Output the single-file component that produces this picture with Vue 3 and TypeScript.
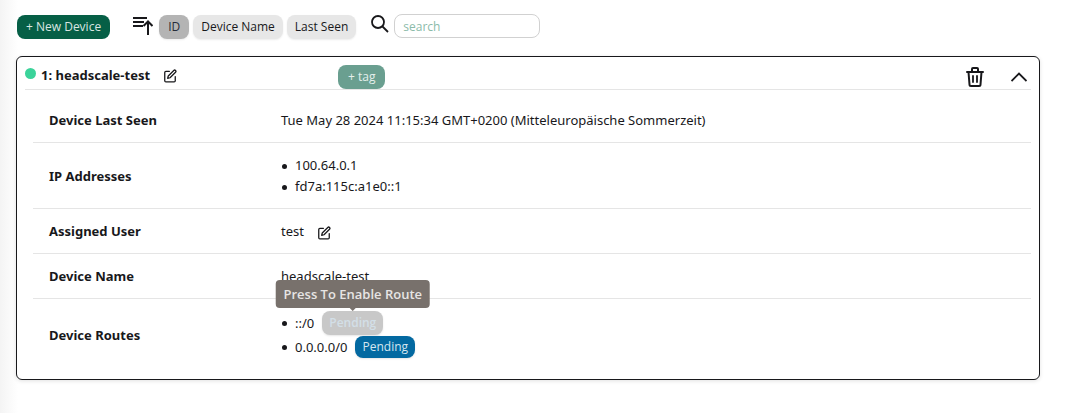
<script setup lang="ts">
import { ref } from 'vue'

interface Route {
  prefix: string
  hovered: boolean
}

const sortKeys: string[] = ['ID', 'Device Name', 'Last Seen']
const activeSort = ref<string>('ID')
const search = ref<string>('')
const addresses: string[] = ['100.64.0.1', 'fd7a:115c:a1e0::1']
const routes: Route[] = [
  { prefix: '::/0', hovered: true },
  { prefix: '0.0.0.0/0', hovered: false },
]
</script>

<template>
  <main class="page">
    <div class="toolbar">
      <button class="btn primary" type="button">+ New Device</button>
      <div class="sorting">
        <button class="icon-btn" type="button" aria-label="Sort direction">
          <svg class="sort-icon" viewBox="0 0 20 20" fill="none" stroke="currentColor" stroke-width="2">
            <path d="M0 3h14M0 7h11M0 11h10M15 20V7M10.500 11 15 6.500l4.500 4.500" />
          </svg>
        </button>
        <button
          v-for="key in sortKeys"
          :key="key"
          class="btn sort"
          :class="{ active: key === activeSort }"
          type="button"
          @click="activeSort = key"
        >{{ key }}</button>
      </div>
      <div class="search">
        <label for="device-search" aria-label="Search devices">
          <svg class="search-icon" viewBox="0 0 18 18" fill="none" stroke="currentColor" stroke-width="1.800">
            <circle cx="7" cy="7" r="6" />
            <path d="m11.500 11.500 5.500 5.500" />
          </svg>
        </label>
        <input id="device-search" v-model="search" type="text" placeholder="search" />
      </div>
    </div>

    <section class="card">
      <header class="card-head">
        <div class="title">
          <span class="status"></span>
          <h2>1: headscale-test</h2>
          <button class="icon-btn" type="button" aria-label="Rename device">
            <svg class="edit-icon" viewBox="0 0 24 24" fill="none" stroke="currentColor" stroke-width="2.200" stroke-linecap="round" stroke-linejoin="round">
              <path d="M11 4H5a2 2 0 0 0-2 2v14a2 2 0 0 0 2 2h14a2 2 0 0 0 2-2v-7" />
              <path d="M18.500 2.500a2.100 2.100 0 0 1 3 3L12 15l-4 1 1-4Z" />
            </svg>
          </button>
        </div>
        <button class="btn tag" type="button">+ tag</button>
        <div class="actions">
          <button class="icon-btn" type="button" aria-label="Delete device">
            <svg class="trash-icon" viewBox="0 0 18 20" fill="none" stroke="currentColor" stroke-width="2" stroke-linecap="round" stroke-linejoin="round">
              <path d="M1 5h16M6 5V2q0-1 1-1h4q1 0 1 1v3M2.500 5l1 12.500q0 1.500 1.500 1.500h8q1.500 0 1.500-1.500l1-12.500" />
              <path d="M7 9v6M11 9v6" stroke-width="1.800" />
            </svg>
          </button>
          <button class="icon-btn" type="button" aria-label="Collapse device">
            <svg class="chevron-icon" viewBox="0 0 16 10" fill="none" stroke="currentColor" stroke-width="1.800">
              <path d="m0.500 9 7.500-7.500L15.500 9" />
            </svg>
          </button>
        </div>
      </header>

      <table>
        <tbody>
          <tr>
            <th scope="row">Device Last Seen</th>
            <td>Tue May 28 2024 11:15:34 GMT+0200 (Mitteleuropäische Sommerzeit)</td>
          </tr>
          <tr>
            <th scope="row">IP Addresses</th>
            <td>
              <ul>
                <li v-for="address in addresses" :key="address">{{ address }}</li>
              </ul>
            </td>
          </tr>
          <tr>
            <th scope="row">Assigned User</th>
            <td>
              <div class="user">
                <span>test</span>
                <button class="icon-btn" type="button" aria-label="Change user">
                  <svg class="edit-icon" viewBox="0 0 24 24" fill="none" stroke="currentColor" stroke-width="2.200" stroke-linecap="round" stroke-linejoin="round">
                    <path d="M11 4H5a2 2 0 0 0-2 2v14a2 2 0 0 0 2 2h14a2 2 0 0 0 2-2v-7" />
                    <path d="M18.500 2.500a2.100 2.100 0 0 1 3 3L12 15l-4 1 1-4Z" />
                  </svg>
                </button>
              </div>
            </td>
          </tr>
          <tr>
            <th scope="row">Device Name</th>
            <td>headscale-test</td>
          </tr>
          <tr>
            <th scope="row">Device Routes</th>
            <td>
              <ul class="routes">
                <li v-for="route in routes" :key="route.prefix">
                  <span>{{ route.prefix }}</span>
                  <span class="route-state">
                    <button class="btn pending" :class="{ muted: route.hovered }" type="button">Pending</button>
                    <span v-if="route.hovered" class="tooltip" role="tooltip">Press To Enable Route</span>
                  </span>
                </li>
              </ul>
            </td>
          </tr>
        </tbody>
      </table>
    </section>
  </main>
</template>

<style>
html {
  min-height: 100%;
  background: linear-gradient(to right, #f4f4f4, #ffffff 18px);
}

body {
  margin: 0;
}
</style>

<style scoped>
.page {
  box-sizing: border-box;
  padding: 14px 34px 32px 16px;
  color: #18181b;
  font: 13px/21px "Segoe UI", "Noto Sans", "Open Sans", sans-serif;
}

button,
input {
  box-sizing: border-box;
  margin: 0;
  font: inherit;
  color: inherit;
}

svg {
  display: block;
}

.toolbar {
  display: flex;
  align-items: flex-start;
  height: 26px;
  padding-left: 1px;
  margin-bottom: 16px;
}

.btn {
  height: 24px;
  padding: 0 9px;
  border: 0;
  border-radius: 8px;
  font-family: "Segoe UI", "Open Sans", sans-serif;
  font-size: 12px;
  line-height: 24px;
  white-space: nowrap;
  cursor: pointer;
}

.toolbar .btn {
  margin-top: 1px;
}

.primary {
  background: #065f46;
  color: #d9e6e2;
}

.sorting {
  display: flex;
  gap: 4px;
  margin-left: 23px;
}

.icon-btn {
  flex: none;
  padding: 0;
  border: 0;
  background: none;
  cursor: pointer;
}

.sort-icon {
  width: 20px;
  height: 20px;
  margin: 0 2px 3px 0;
}

.sort {
  padding: 0 8px;
  background: #e7e7e7;
  box-shadow: 0 1px 2px rgba(0, 0, 0, 0.08);
}

.sort.active {
  padding: 0 9px;
  background: #b4b4b4;
  color: #262c38;
}

.search {
  display: flex;
  gap: 5px;
  margin-left: 15px;
}

.search-icon {
  width: 18px;
  height: 18px;
  margin-top: 1px;
}

.search input {
  width: 146px;
  height: 24px;
  padding: 0 8px;
  border: 1px solid #d1d1d1;
  border-radius: 8px;
  background: #ffffff;
  font-family: "Segoe UI", "Open Sans", sans-serif;
  font-size: 12px;
  outline: 0;
}

.search input::placeholder {
  color: #8bbba9;
  opacity: 1;
}

.card {
  padding: 0 8px 9px;
  border: 1px solid #18181b;
  border-radius: 6px;
  background: #ffffff;
  box-shadow: 0 1px 4px rgba(0, 0, 0, 0.12);
}

.card-head {
  display: grid;
  grid-template-columns: 313px auto 1fr;
  align-items: end;
  height: 32px;
  border-bottom: 1px solid #e5e5e5;
}

.title {
  display: flex;
  align-items: center;
  height: 28px;
}

.status {
  width: 11px;
  height: 11px;
  margin: 0 5px 3px 0;
  border-radius: 50%;
  background: #3bd39a;
}

h2 {
  margin: 0 13px 0 0;
  font-size: 13px;
  line-height: 21px;
  font-weight: 700;
}

.edit-icon {
  width: 14px;
  height: 14px;
  margin-top: 2px;
}

.tag {
  padding: 0 10px;
  background: #6a9f90;
  color: #e5efec;
}

.actions {
  display: flex;
  justify-content: flex-end;
  align-items: center;
  gap: 27px;
  height: 24px;
  padding-right: 4px;
}

.trash-icon {
  width: 18px;
  height: 20px;
}

.chevron-icon {
  width: 16px;
  height: 10px;
}

table {
  width: calc(100% - 8px);
  margin: 8px 0 0 8px;
  border-collapse: separate;
  border-spacing: 0;
}

th,
td {
  padding: 12px 16px 11px;
  border-bottom: 1px solid #e5e5e5;
  text-align: left;
  vertical-align: middle;
}

th {
  box-sizing: border-box;
  width: 232px;
  font-weight: 700;
}

tr:last-child > * {
  border-bottom: 0;
}

ul {
  margin: 0;
  padding: 0;
  list-style: none;
}

li {
  display: flex;
  align-items: center;
}

li::before {
  content: "";
  width: 5px;
  height: 5px;
  margin: 1px 8px 0 1px;
  border-radius: 50%;
  background: currentColor;
}

.user {
  display: flex;
  align-items: center;
  gap: 13px;
}

.routes li {
  height: 24px;
}

.route-state {
  position: relative;
  display: flex;
  margin-left: 8px;
}

.pending {
  height: 22px;
  padding: 0 7px;
  background: #0369a1;
  color: #d5e6f0;
  font-weight: 500;
  line-height: 22px;
  box-shadow: 0 1px 2px rgba(0, 0, 0, 0.1);
}

.pending.muted {
  height: 24px;
  background: #c8c8c8;
  color: #d3dfe7;
  font-weight: 600;
  line-height: 24px;
}

.tooltip {
  position: absolute;
  bottom: calc(100% + 3px);
  left: 50%;
  padding: 4px 8px;
  border-radius: 4px;
  background: #78716c;
  color: #e7e5e4;
  font-family: "Segoe UI", "Open Sans", sans-serif;
  font-weight: 600;
  line-height: 20px;
  white-space: nowrap;
  transform: translateX(-50%);
}

.tooltip::after {
  content: "";
  position: absolute;
  top: 100%;
  left: 50%;
  margin-left: -3px;
  border: 3px solid transparent;
  border-top-color: #78716c;
  border-bottom: 0;
}
</style>
